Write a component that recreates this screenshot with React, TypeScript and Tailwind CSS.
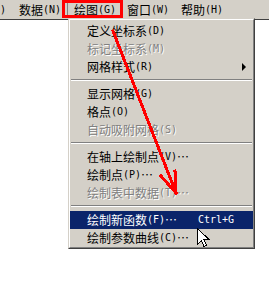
import React from 'react';

const cjk = "font-['Noto_Sans_CJK_SC','DejaVu_Sans',sans-serif]";
const mono = "font-['DejaVu_Sans_Mono',monospace]";

type ItemProps = {
  label: string;
  k: string;
  dots?: boolean;
  shortcut?: string;
  sub?: boolean;
  disabled?: boolean;
  active?: boolean;
};

function Label({ label, k, dots }: { label: string; k: string; dots?: boolean }) {
  return (
    <span className="flex items-center whitespace-nowrap">
      <span className={`${cjk} text-[12px] leading-none`}>{label}</span>
      <span className={`${mono} text-[10px] leading-none`}>({k})</span>
      {dots && <span className={`${cjk} inline-block w-[12px] text-center text-[12px] leading-none`}>⋯</span>}
    </span>
  );
}

function Item({ label, k, dots, shortcut, sub, disabled, active }: ItemProps) {
  let tone = 'text-black';
  if (active) tone = 'bg-[#0a246a] text-white';
  else if (disabled) tone = 'text-[#808080] [text-shadow:1px_1px_0_#ffffff]';

  return (
    <div className={`flex h-[18px] items-center pl-[17px] ${tone}`}>
      <Label label={label} k={k} dots={dots} />
      {shortcut && (
        <span className={`${mono} ml-auto mr-[19px] text-[10px] leading-none`}>{shortcut}</span>
      )}
      {sub && (
        <span className="ml-auto mr-[7px] h-0 w-0 border-y-[4px] border-l-[4px] border-y-transparent border-l-black" />
      )}
    </div>
  );
}

function Separator() {
  return (
    <div className="h-[9px] px-[1px] pt-[3px]">
      <div className="h-px bg-[#808080]" />
      <div className="h-px bg-white" />
    </div>
  );
}

function BarItem({ label, k, pressed }: { label: string; k: string; pressed?: boolean }) {
  if (pressed) {
    return (
      <div className="flex h-[18px] w-[54px] items-center border border-b-white border-l-[#808080] border-r-white border-t-[#808080] pl-[6px] pt-[2px]">
        <Label label={label} k={k} />
      </div>
    );
  }
  return (
    <div className="flex h-[19px] w-[54px] items-center pl-[6px]">
      <Label label={label} k={k} />
    </div>
  );
}

export default function App() {
  return (
    <div className="relative h-[282px] w-[269px] overflow-hidden bg-white text-black">
      {/* menu bar */}
      <div className="flex h-[20px] items-start border-b border-[#404040] bg-[#d4d0c8]">
        <div className={`${mono} flex h-[19px] w-[13px] items-center text-[10px] leading-none`}>)</div>
        <BarItem label="数据" k="N" />
        <BarItem label="绘图" k="G" pressed />
        <BarItem label="窗口" k="W" />
        <BarItem label="帮助" k="H" />
      </div>

      {/* dropdown */}
      <div className="absolute left-[68px] top-[18px] w-[187px] border border-b-[#404040] border-l-[#d4d0c8] border-r-[#404040] border-t-[#d4d0c8] bg-[#d4d0c8]">
        <div className="border border-b-[#808080] border-l-white border-r-[#808080] border-t-white pt-[2px]">
          <Item label="定义坐标系" k="D" />
          <Item label="标记坐标系" k="M" disabled />
          <Item label="网格样式" k="R" sub />
          <Separator />
          <Item label="显示网格" k="G" />
          <Item label="格点" k="O" />
          <Item label="自动吸附网格" k="S" disabled />
          <Separator />
          <Item label="在轴上绘制点" k="V" dots />
          <Item label="绘制点" k="P" dots />
          <Item label="绘制表中数据" k="T" dots disabled />
          <Separator />
          <Item label="绘制新函数" k="F" dots shortcut="Ctrl+G" active />
          <Item label="绘制参数曲线" k="C" dots />
        </div>
      </div>

      {/* mouse cursor */}
      <svg className="absolute left-[197px] top-[228px]" width="13" height="21" viewBox="0 0 13 21">
        <path
          d="M0.5 0.5 L0.5 16.5 L4.5 12.5 L7 18.5 L9.5 17.5 L7 11.5 L12 11.5 Z"
          fill="#ffffff"
          stroke="#000000"
          strokeWidth="1"
          shapeRendering="crispEdges"
        />
      </svg>

      {/* annotation: red box and arrow */}
      <div className="absolute left-[62px] top-0 h-[18px] w-[61px] border-[3px] border-[#ff0000]" />
      <svg className="pointer-events-none absolute left-0 top-0" width="269" height="282">
        <g stroke="#ff0000" strokeWidth="3" fill="none" strokeLinecap="square" shapeRendering="crispEdges">
          <line x1="113" y1="31" x2="176" y2="193" />
          <line x1="176" y1="193" x2="175" y2="171" />
          <line x1="176" y1="193" x2="161" y2="176" />
        </g>
      </svg>
    </div>
  );
}
